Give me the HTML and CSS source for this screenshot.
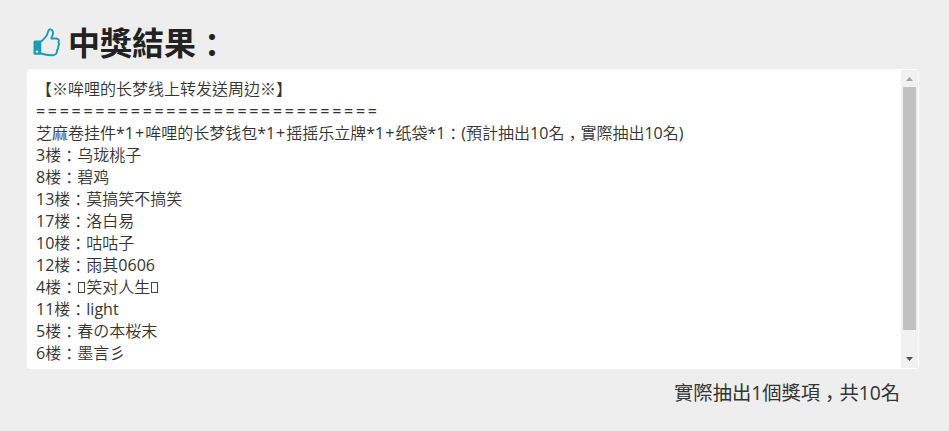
FILE: index.html
```
<!DOCTYPE html>
<html lang="zh-Hant">
<head>
  <meta charset="UTF-8" />
  <title>中獎結果</title>
  <link rel="stylesheet" href="styles.css">
</head>
<body>
  <h2 class="title">
    <svg class="thumb" width="28" height="30" viewBox="0 0 28 30">
      <path d="M8 13.5C10.5 12 12 9.5 13.5 7.8C15 6 14.5 2.2 16.5 1.5C19.5 .9 20.6 4 19.7 6.8L18.3 10.5H23C25.8 10.5 26.4 12.5 25.4 14.4C26.3 15.7 26.1 17.1 25.1 18.3C25.6 20 25 21.2 24 22.1C24.2 25 22.8 27 20 27.2C15 27.7 12 26.3 8 25.5" fill="none" stroke="#1b9cb5" stroke-width="1.9" stroke-linejoin="round" />
      <path d="M2 12.5H8.3V26.8H2Q.5 26.8 .5 25.3V14Q.5 12.5 2 12.5Z" fill="#1b9cb5" />
      <circle cx="4" cy="23.6" r="1.2" fill="#eee" />
    </svg>
    <span>中獎結果<span class="low">：</span></span>
  </h2>
  <div class="result">
    <div class="lines">
      <div class="name">【※哞哩的长梦线上转发送周边※】</div>
      <div class="rule">=============================</div>
      <div class="prize">芝麻卷挂件*1<span class="plus">+</span>哞哩的长梦钱包*1<span class="plus">+</span>摇摇乐立牌*1<span class="plus">+</span>纸袋*1<span class="low">：</span>(預計抽出10名<span class="comma">，</span>實際抽出10名)</div>
      <div>3楼<span class="low">：</span>乌珑桃子</div>
      <div>8楼<span class="low">：</span>碧鸡</div>
      <div>13楼<span class="low">：</span>莫搞笑不搞笑</div>
      <div>17楼<span class="low">：</span>洛白易</div>
      <div>10楼<span class="low">：</span>咕咕子</div>
      <div>12楼<span class="low">：</span>雨其0606</div>
      <div>4楼<span class="low">：</span><span class="box"></span>笑对人生<span class="box"></span></div>
      <div>11楼<span class="low">：</span>light</div>
      <div>5楼<span class="low">：</span>春の本桜末</div>
      <div>6楼<span class="low">：</span>墨言彡</div>
    </div>
    <div class="scrollbar">
      <svg class="arrow" width="17" height="18" viewBox="0 0 17 18"><path d="M5 11L8.5 7L12 11Z" fill="#a3a3a3" /></svg>
      <div class="handle"></div>
      <svg class="arrow" width="17" height="18" viewBox="0 0 17 18"><path d="M5 7L8.5 11L12 7Z" fill="#505050" /></svg>
    </div>
  </div>
  <p class="total">實際抽出1個獎項<span class="comma">，</span>共10名</p>
</body>
</html>
```
FILE: styles.css
```
* {
  box-sizing: border-box;
}

body {
  margin: 0;
  height: 431px;
  padding: 16px 30px 0 27px;
  overflow: hidden;
  background: #eee;
  color: #333;
  font-family: "Open Sans", "Noto Sans CJK TC", sans-serif;
}

.title {
  display: flex;
  align-items: center;
  gap: 7px;
  height: 53px;
  margin: 0;
  padding-left: 6px;
  font-size: 32px;
  line-height: 48px;
  color: #222;
}

.result {
  display: flex;
  justify-content: space-between;
  width: 892px;
  height: 300px;
  padding: 1px;
  background: #fff;
  border-radius: 4px;
  overflow: hidden;
}

.lines {
  padding: 8px 0 0 8px;
  font-family: "Open Sans", "Noto Sans CJK TC DemiLight", "Noto Sans CJK TC", sans-serif;
  font-size: 16px;
  line-height: 22px;
  white-space: nowrap;
}

.rule {
  letter-spacing: 2.7px;
}

.plus {
  margin: 0 1px;
}

/* full-width punctuation sits near the baseline */
.low {
  line-height: 0;
  vertical-align: -0.06em;
}

.comma {
  line-height: 0;
  vertical-align: -0.3em;
}

.box {
  display: inline-block;
  width: 7px;
  height: 11px;
  margin: 0 1px;
  border: 1px solid #444;
}

.scrollbar {
  display: flex;
  flex-direction: column;
  justify-content: space-between;
  width: 17px;
  background: #f1f1f1;
}

.arrow {
  display: block;
}

.handle {
  width: 13px;
  height: 243px;
  margin: -1px auto auto;
  background: #c1c1c1;
}

.total {
  margin: 10px 19px 0 0;
  font-size: 19.3px;
  line-height: 28px;
  text-align: right;
}
```
